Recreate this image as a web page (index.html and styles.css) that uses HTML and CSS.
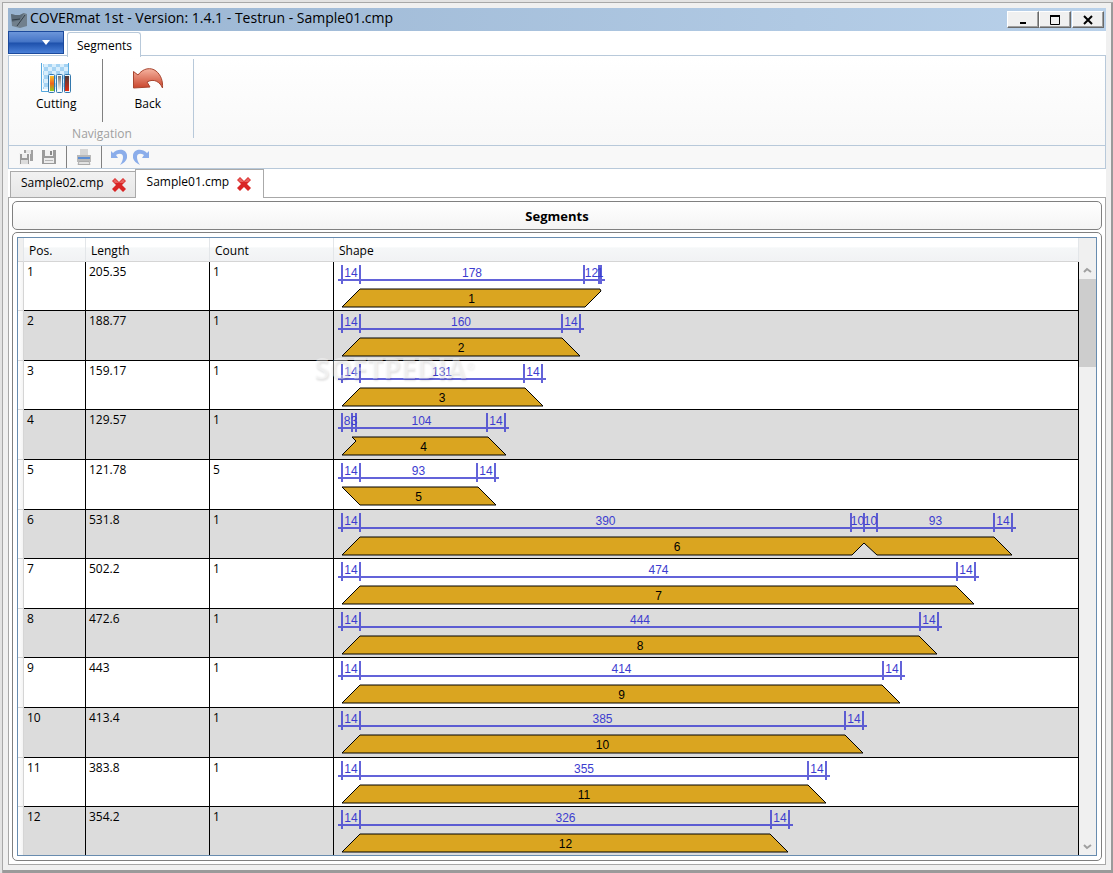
FILE: index.html
```html
<!DOCTYPE html>
<html lang="en">
<head>
    <meta charset="UTF-8">
    <meta name="viewport" content="width=device-width, initial-scale=1.0">
    <title>COVERmat 1st - Version: 1.4.1 - Testrun - Sample01.cmp</title>
    <link rel="stylesheet" href="styles.css">
</head>
<body>
    <div class="window">
        <header class="titlebar">
            <svg class="app-icon" width="16" height="16" viewBox="0 0 16 16">
                <path d="M0 2l4 1h5l4-2 3 1v12l-7 2-8-2z" fill="#71808d"/>
                <path d="M0 2l4 1h5l4-2-4 7-8 2z" fill="#5d6c79"/>
                <path d="M1 8l8-1M6 14L14 3" stroke="#333f49" fill="none"/>
            </svg>
            <h1>COVERmat 1st - Version: 1.4.1 - Testrun - Sample01.cmp</h1>
            <div class="window-buttons">
                <button type="button" aria-label="Minimize"><svg width="10" height="10"><path d="M2 8h6" stroke="#000" stroke-width="2"/></svg></button>
                <button type="button" aria-label="Maximize"><svg width="10" height="10"><path d="M.5 1v8.500h9V1" stroke="#000" fill="none"/><path d="M0 1h10" stroke="#000" stroke-width="2"/></svg></button>
                <button type="button" class="close" aria-label="Close"><svg width="10" height="10"><path d="M1 1l8 8M9 1l-8 8" stroke="#000" stroke-width="2"/></svg></button>
            </div>
        </header>

        <nav class="ribbon-tabs">
            <button type="button" class="app-menu" aria-label="Application menu"><svg width="8" height="5"><path d="M0 0h8l-4 5z" fill="#fff"/></svg></button>
            <button type="button" class="ribbon-tab">Segments</button>
        </nav>

        <section class="ribbon">
            <div class="ribbon-group">
                <div class="ribbon-items">
                    <button type="button" class="ribbon-button">
                        <svg width="32" height="32" viewBox="0 0 32 32">
                            <defs>
                                <pattern id="checks" width="8" height="8" patternUnits="userSpaceOnUse">
                                    <rect width="8" height="8" fill="#d8eefc"/>
                                    <path d="M0 0h4v4H0zM4 4h4v4H4z" fill="#a5d3f3"/>
                                </pattern>
                                <linearGradient id="fire" x2="0" y2="1"><stop offset="0" stop-color="#f9c22b"/><stop offset=".5" stop-color="#f0641c"/><stop offset="1" stop-color="#8fd01c"/></linearGradient>
                                <linearGradient id="steel" x2="0" y2="1"><stop offset="0" stop-color="#777"/><stop offset="1" stop-color="#fff"/></linearGradient>
                                <linearGradient id="rust" x2="0" y2="1"><stop offset="0" stop-color="#4a3a3a"/><stop offset="1" stop-color="#e02a10"/></linearGradient>
                            </defs>
                            <rect x="3" y="1" width="25" height="25" fill="url(#checks)"/>
                            <path d="M1.500 0v28.500H9M28.500 0v11" stroke="#55a8de" fill="none"/>
                            <g fill="#eef7fd" stroke="#3378ad">
                                <rect x="8.500" y="11.500" width="6" height="18" rx="1"/>
                                <rect x="16.500" y="11.500" width="6" height="18" rx="1"/>
                                <rect x="24.500" y="11.500" width="6" height="18" rx="1"/>
                            </g>
                            <rect x="10" y="13" width="4" height="15" fill="url(#fire)"/>
                            <rect x="18" y="13" width="3" height="15" fill="url(#steel)"/>
                            <rect x="25" y="13" width="4" height="15" fill="url(#rust)"/>
                        </svg>
                        <span>Cutting</span>
                    </button>
                    <div class="ribbon-rule"></div>
                    <button type="button" class="ribbon-button">
                        <svg width="32" height="32" viewBox="0 0 32 32">
                            <defs><linearGradient id="red" x2="0" y2="1"><stop offset="0" stop-color="#f6b3a0"/><stop offset="1" stop-color="#c9452c"/></linearGradient></defs>
                            <path d="M1.500 8.500L6 12C11 5 19 4 24 8c5 4 7 10 6.500 17C28 19 22 15 15 19l3 5-16.500 1z" fill="url(#red)" stroke="#a8452f"/>
                        </svg>
                        <span>Back</span>
                    </button>
                </div>
                <div class="group-label">Navigation</div>
            </div>
        </section>

        <div class="quick-bar">
            <button type="button" aria-label="Save all"><svg width="16" height="16" viewBox="0 0 16 16">
                <path d="M5 1h9v11H5z" fill="#a2a2a2"/><path d="M7 1h5v4H7z" fill="#e6e6e6"/>
                <path d="M.5 4.500h10v11H.5z" fill="#9b9b9b" stroke="#f5f5f5"/><path d="M3 5h5v4H3z" fill="#efefef"/><path d="M2 11h7v4H2z" fill="#dcdcdc"/>
            </svg></button>
            <button type="button" aria-label="Save"><svg width="16" height="16" viewBox="0 0 16 16">
                <path d="M1 1h14v14H1z" fill="#9b9b9b"/><path d="M4 1h8v6H4z" fill="#f2f2f2"/><path d="M9 2h2v4H9z" fill="#888"/><path d="M3 9h10v5H3z" fill="#ececec"/><path d="M4 11.500h8" stroke="#b5b5b5"/>
            </svg></button>
            <div class="quick-rule"></div>
            <button type="button" aria-label="Print"><svg width="16" height="16" viewBox="0 0 16 16">
                <path d="M4 0h8v8H4z" fill="#d6d6d6"/><path d="M1 6h14v7H1z" fill="#b9b9b9"/><path d="M2 8h12v2H2z" fill="#5b8dd4"/><path d="M3 12.500h10l1 3H2z" fill="#e2e2e2" stroke="#aaa"/>
            </svg></button>
            <div class="quick-rule"></div>
            <button type="button" aria-label="Undo"><svg width="16" height="16" viewBox="0 0 16 16"><path d="M0 2v7h7L5 6c3-2 7-2 7 2 0 3-1 5-3 8 5-2 8-6 7-10C15 0 7-1 2 4z" fill="#8badea"/></svg></button>
            <button type="button" aria-label="Redo"><svg width="16" height="16" viewBox="0 0 16 16"><path d="M16 2v7H9l2-3C8 4 4 4 4 8c0 3 1 5 3 8C2 14-1 10 0 6 1 0 9-1 14 4z" fill="#8badea"/></svg></button>
        </div>

        <nav class="doc-tabs">
            <div class="doc-tab">
                <a href="#sample02">Sample02.cmp</a>
                <button type="button" aria-label="Close Sample02.cmp"><svg width="16" height="16" viewBox="0 0 16 16"><path d="M4 1l4 4 4-4 3 3-4 4 4 4-3 3-4-4-4 4-3-3 4-4-4-4z" fill="#d92525"/><path d="M4 2l4 4 4-4 2 2-2 2H4L2 4z" fill="#e8605c"/></svg></button>
            </div>
            <div class="doc-tab active">
                <a href="#sample01">Sample01.cmp</a>
                <button type="button" aria-label="Close Sample01.cmp"><svg width="16" height="16" viewBox="0 0 16 16"><path d="M4 1l4 4 4-4 3 3-4 4 4 4-3 3-4-4-4 4-3-3 4-4-4-4z" fill="#d92525"/><path d="M4 2l4 4 4-4 2 2-2 2H4L2 4z" fill="#e8605c"/></svg></button>
            </div>
        </nav>

        <main class="document">
            <h2>Segments</h2>
            <div class="panel">
                <div class="grid">
                    <div class="grid-view">
                        <table>
                            <thead>
                                <tr>
                                    <th class="row-head"></th>
                                    <th class="pos">Pos.</th>
                                    <th class="length">Length</th>
                                    <th class="count">Count</th>
                                    <th>Shape</th>
                                </tr>
                            </thead>
                            <tbody id="segments"></tbody>
                        </table>
                    </div>
                    <div class="scrollbar">
                        <svg width="9" height="6"><path d="M1 5l3-3 4 3" stroke="#a0a0a0" stroke-width="2" fill="none"/></svg>
                        <div class="thumb"></div>
                        <svg width="9" height="6"><path d="M1 1l3 3 4-3" stroke="#a0a0a0" stroke-width="2" fill="none"/></svg>
                    </div>
                    <div class="watermark">SOFTPEDIA<sup>®</sup></div>
                </div>
            </div>
        </main>
    </div>
    <script src="segments.js"></script>
</body>
</html>
```

FILE: segments.js
```js
// ticks: where the dimension line is divided, labels: the lengths between the ticks
// outline: corners of the sheet, 0 is the upper edge and 18 the lower edge
const segments = [
    { length: "205.35", count: 1, ticks: [8, 26, 250, 265, 267], labels: [14, 178, 12, 1], outline: "8,18 26,0 266,0 267,2 251,18" },
    { length: "188.77", count: 1, ticks: [8, 26, 228, 246], labels: [14, 160, 14], outline: "8,18 26,0 228,0 246,18" },
    { length: "159.17", count: 1, ticks: [8, 26, 190, 208], labels: [14, 131, 14], outline: "8,18 26,0 191,0 209,18" },
    { length: "129.57", count: 1, ticks: [8, 18, 22, 153, 171], labels: [8, 3, 104, 14], outline: "8,18 22,4 18,0 154,0 172,18" },
    { length: "121.78", count: 5, ticks: [8, 26, 143, 161], labels: [14, 93, 14], outline: "8,0 26,18 162,18 144,0" },
    { length: "531.8", count: 1, ticks: [8, 26, 517, 530, 543, 660, 678], labels: [14, 390, 10, 10, 93, 14], outline: "8,18 26,0 660,0 678,18 543,18 530,6 518,18" },
    { length: "502.2", count: 1, ticks: [8, 26, 623, 641], labels: [14, 474, 14], outline: "8,18 26,0 622,0 640,18" },
    { length: "472.6", count: 1, ticks: [8, 26, 586, 604], labels: [14, 444, 14], outline: "8,18 26,0 585,0 603,18" },
    { length: "443", count: 1, ticks: [8, 26, 549, 567], labels: [14, 414, 14], outline: "8,18 26,0 548,0 566,18" },
    { length: "413.4", count: 1, ticks: [8, 26, 511, 529], labels: [14, 385, 14], outline: "8,18 26,0 511,0 529,18" },
    { length: "383.8", count: 1, ticks: [8, 26, 474, 492], labels: [14, 355, 14], outline: "8,18 26,0 474,0 492,18" },
    { length: "354.2", count: 1, ticks: [8, 26, 437, 455], labels: [14, 326, 14], outline: "8,18 26,0 436,0 454,18" }
];

function drawShape(segment, pos) {
    const ticks = segment.ticks;
    const last = ticks[ticks.length - 1];
    let svg = `<svg class="shape" width="${last + 8}" height="48">`;

    svg += `<path class="dimension" d="M${ticks[0] - 4} 18H${last + 4}`;
    ticks.forEach((x) => {
        svg += `M${x} 3v19`;
    });
    svg += `"/>`;

    segment.labels.forEach((label, i) => {
        svg += `<text class="size" x="${(ticks[i] + ticks[i + 1]) / 2}" y="15">${label}</text>`;
    });

    svg += `<polygon points="${segment.outline}" transform="translate(0 27)"/>`;
    svg += `<text x="${(ticks[0] + last) / 2}" y="41">${pos}</text></svg>`;
    return svg;
}

document.getElementById("segments").innerHTML = segments.map((segment, i) => `
    <tr>
        <td class="row-head"></td>
        <td>${i + 1}</td>
        <td>${segment.length}</td>
        <td>${segment.count}</td>
        <td class="drawing">${drawShape(segment, i + 1)}</td>
    </tr>`).join("");
```

FILE: styles.css
```css
* {
    box-sizing: border-box;
}

body {
    margin: 0;
    background-color: #e3e3e3;
    color: #000;
    font-family: "Open Sans", "Segoe UI", sans-serif;
    font-size: 12px;
}

h1, h2 {
    margin: 0;
}

button {
    margin: 0;
    padding: 0;
    border: none;
    background: none;
    color: inherit;
    font: inherit;
}

.window {
    display: flex;
    flex-direction: column;
    height: 100vh;
    padding: 6px 7px 8px 6px;
    border: 1px solid #e3e3e3;
    border-width: 2px 0 0 2px;
    background-color: #f0f0f0;
    box-shadow: inset 1px 1px 0 #a8a8a8, inset -2px -3px 0 #9a9a9a;
}

.titlebar {
    display: flex;
    align-items: center;
    height: 23px;
    padding: 0 2px;
    background: linear-gradient(to right, #99b4d1, #b9d1ea);
}

.app-icon {
    margin: 0 3px 0 1px;
}

.titlebar h1 {
    flex: 1;
    height: 24px;
    font-size: 14px;
    font-weight: normal;
    line-height: 20px;
}

.window-buttons {
    display: flex;
}

.window-buttons button {
    display: flex;
    align-items: center;
    justify-content: center;
    width: 32px;
    height: 17px;
    border: 1px solid;
    border-color: #fff #696969 #696969 #fff;
    background-color: #f0f0f0;
    box-shadow: inset -1px -1px 0 #a0a0a0;
}

.window-buttons .close {
    margin-left: 1px;
}

.ribbon-tabs {
    display: flex;
    height: 24px;
    background-color: #fff;
}

.app-menu {
    display: flex;
    align-items: center;
    justify-content: flex-end;
    width: 56px;
    height: 23px;
    padding-right: 13px;
    border: 1px solid #1c4a9c;
    background: linear-gradient(#6c96da, #4474c6 48%, #1d50ab 52%, #4a80d8);
}

.ribbon-tab {
    height: 25px;
    margin: 1px 0 0 3px;
    padding: 0 8px 0 9px;
    border: 1px solid #b8c9da;
    border-bottom: none;
    border-radius: 3px 3px 0 0;
    background-color: #fff;
    z-index: 1;
}

.ribbon {
    display: flex;
    height: 91px;
    border: 1px solid #b8c9da;
    background: linear-gradient(#fff, #f8f8f8);
}

.ribbon-group {
    display: flex;
    flex-direction: column;
    width: 185px;
    margin: 3px 0 7px;
    padding-left: 2px;
    border-right: 1px solid #b8c9da;
}

.ribbon-items {
    display: flex;
    flex: 1;
}

.ribbon-button {
    display: flex;
    flex: 1;
    flex-direction: column;
    align-items: center;
    justify-content: flex-start;
    padding-top: 4px;
    line-height: 18px;
}

.ribbon-rule {
    width: 1px;
    background-color: #808080;
}

.group-label {
    height: 16px;
    color: #a0a0a0;
    line-height: 24px;
    text-align: center;
}

.quick-bar {
    display: flex;
    align-items: center;
    height: 23px;
    padding-left: 10px;
    gap: 6px;
    border: 1px solid #b8c9da;
    border-top: none;
    background-color: #f8f8f8;
}

.quick-bar button {
    display: flex;
}

.quick-rule {
    width: 1px;
    height: 22px;
    margin: 0 3px;
    background-color: #808080;
}

.doc-tabs {
    display: flex;
    align-items: flex-end;
    height: 28px;
    padding-left: 2px;
    background-color: #fff;
}

.doc-tab {
    display: flex;
    align-items: center;
    height: 26px;
    padding: 0 8px 0 10px;
    gap: 7px;
    border: 1px solid #aaa;
    border-bottom: none;
    background: linear-gradient(#f2f2f2, #e6e6e6);
}

.doc-tab a {
    padding-bottom: 4px;
    color: inherit;
    line-height: 16px;
    text-decoration: none;
}

.doc-tab button {
    display: flex;
}

.doc-tab.active {
    height: 29px;
    margin: 0 0 -1px -1px;
    padding: 0 11px;
    background: #fff;
    z-index: 1;
}

.document {
    display: flex;
    flex: 1;
    flex-direction: column;
    gap: 2px;
    min-height: 0;
    padding: 3px;
    border: 1px solid #a8a8a8;
    background-color: #fff;
}

.document h2 {
    height: 29px;
    border: 1px solid #808080;
    border-radius: 5px;
    background: linear-gradient(#fff, #f4f4f4);
    font-size: 13px;
    line-height: 28px;
    text-align: center;
}

.panel {
    display: flex;
    flex: 1;
    min-height: 0;
    padding: 4px;
    border: 1px solid #808080;
    border-radius: 5px;
}

.grid {
    position: relative;
    display: flex;
    flex: 1;
    border: 1px solid #688caf;
}

.grid-view {
    flex: 1;
    overflow: hidden;
}

table {
    width: 100%;
    border-collapse: separate;
    border-spacing: 0;
    table-layout: fixed;
}

th {
    height: 24px;
    padding: 2px 0 0 5px;
    border-right: 1px solid #e3e6e9;
    border-bottom: 1px solid #d5d5d5;
    background: linear-gradient(#fff, #fff 40%, #f5f7f8 42%, #f1f2f4);
    font-weight: normal;
    text-align: left;
}

.row-head {
    width: 6px;
    padding: 0;
}

th.row-head {
    background: #f0f0f0;
}

.pos {
    width: 62px;
}

.length, .count {
    width: 124px;
}

td {
    height: 50px;
    padding: 2px 3px;
    border-right: 1px solid #000;
    border-bottom: 1px solid #000;
    line-height: 16px;
    vertical-align: top;
}

tr:nth-child(5n+1) td,
tr:nth-child(5n+3) td {
    height: 49px;
}

tr:nth-child(even) td {
    background-color: #dcdcdc;
}

tbody .row-head,
tr:nth-child(even) td.row-head {
    padding: 0;
    border-color: #d5d5d5;
    background: linear-gradient(to right, #fff, #f4f4f4);
}

.drawing {
    padding: 0;
}

.shape {
    display: block;
    font-family: "Liberation Sans", Arial, sans-serif;
    font-size: 12px;
    text-anchor: middle;
}

.shape polygon {
    fill: #daa520;
    stroke: #000;
}

.shape .dimension {
    fill: none;
    stroke: #3c3ccf;
    stroke-width: 2px;
    stroke-opacity: 0.8;
}

.shape .size {
    fill: #3c3ccf;
}

.scrollbar {
    display: flex;
    flex-direction: column;
    align-items: center;
    width: 17px;
    padding: 29px 0 5px;
    background-color: #f0f0f0;
}

.thumb {
    width: 100%;
    height: 88px;
    margin: 6px 0 auto;
    background-color: #cdcdcd;
}

.watermark {
    position: absolute;
    top: 112px;
    left: 296px;
    color: rgba(255, 255, 255, 0.4);
    font-size: 28px;
    font-weight: bold;
    line-height: 36px;
    text-shadow: 1px 2px 2px rgba(0, 0, 0, 0.1);
    pointer-events: none;
}

.watermark sup {
    font-size: 10px;
    line-height: 0;
}
```
